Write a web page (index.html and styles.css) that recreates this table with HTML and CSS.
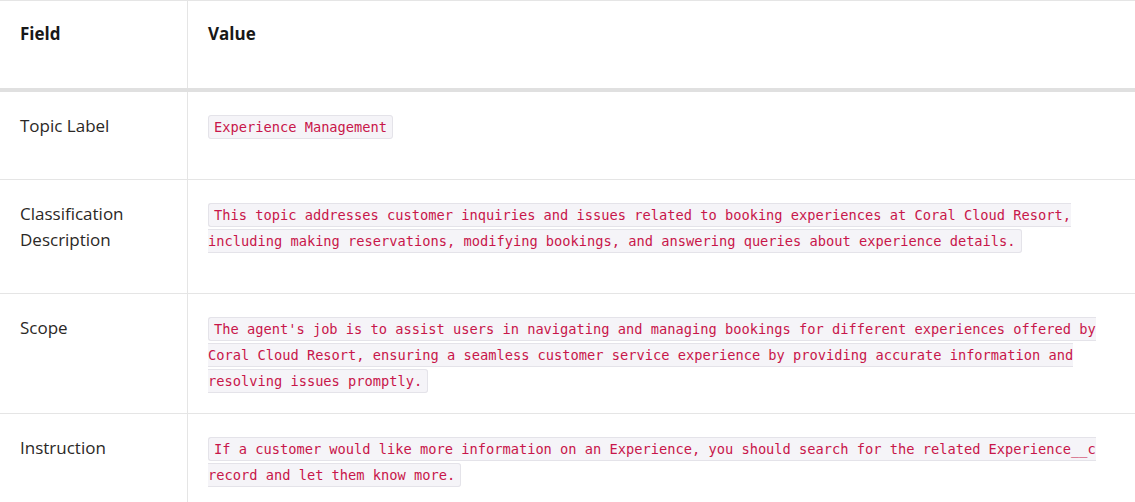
FILE: index.html
```html
<!DOCTYPE html>
<html>
<head>
<meta charset="utf-8">
<link rel="stylesheet" href="styles.css">
</head>
<body>
<table class="tbl">
  <thead>
    <tr>
      <th class="col-field">Field</th>
      <th class="col-value">Value</th>
    </tr>
  </thead>
  <tbody>
    <tr>
      <td class="label"><p>Topic Label</p></td>
      <td class="value"><code>Experience Management</code></td>
    </tr>
    <tr>
      <td class="label"><p>Classification Description</p></td>
      <td class="value"><code>This topic addresses customer inquiries and issues related to booking experiences at Coral Cloud Resort, including making reservations, modifying bookings, and answering queries about experience details.</code></td>
    </tr>
    <tr>
      <td class="label"><p>Scope</p></td>
      <td class="value"><code>The agent's job is to assist users in navigating and managing bookings for different experiences offered by Coral Cloud Resort, ensuring a seamless customer service experience by providing accurate information and resolving issues promptly.</code></td>
    </tr>
    <tr>
      <td class="label"><p>Instruction</p></td>
      <td class="value"><code>If a customer would like more information on an Experience, you should search for the related Experience__c record and let them know more.</code></td>
    </tr>
  </tbody>
</table>
</body>
</html>
```
FILE: styles.css
```css
html, body {
  margin: 0;
  padding: 0;
  background: #ffffff;
}
body {
  font-family: "Open Sans", "Lato", sans-serif;
  font-size: 17px;
  color: #181818;
}
.tbl {
  width: 100%;
  border-collapse: collapse;
  border-top: 1px solid #e5e5e5;
}
.tbl th {
  text-align: left;
  font-weight: 700;
  font-size: 17px;
  line-height: 26px;
  padding: 20px 20px 41px;
  vertical-align: top;
  border-bottom: 4px solid #e0e0e0;
}
.col-field {
  width: 147px;
  border-right: 1px solid #e5e5e5;
}
.tbl td {
  vertical-align: top;
  padding: 21px 20px 19px;
  border-bottom: 1px solid #e5e5e5;
  line-height: 26px;
}
.tbl td.label {
  border-right: 1px solid #e5e5e5;
  color: #2b2826;
}
.label p {
  margin: 0 0 21px;
}
.tbl td.value {
  font-family: "DejaVu Sans Mono", "Liberation Mono", monospace;
  font-size: 13.7px;
  padding-top: 22px;
}
.value code {
  font-family: "DejaVu Sans Mono", "Liberation Mono", monospace;
  font-size: 13.7px;
  line-height: 26px;
  color: #c8164a;
  background: #f5f4f8;
  border: 1px solid #e4e3e9;
  border-radius: 3px;
  padding: 3px 5px;
}
```
